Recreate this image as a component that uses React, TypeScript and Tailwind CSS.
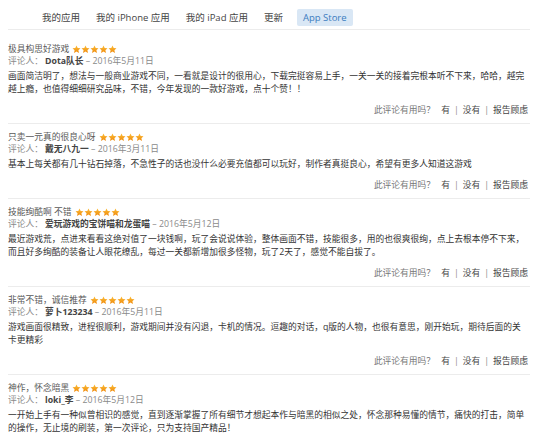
import React from 'react';

type Review = {
  title: string;
  name: string;
  date: string;
  lines: string[];
};

const reviews: Review[] = [
  {
    title: '极具构思好游戏',
    name: 'Dota队长',
    date: '2016年5月11日',
    lines: [
      '画面简洁明了，想法与一般商业游戏不同，一看就是设计的很用心，下载完挺容易上手，一关一关的接着完根本听不下来，哈哈，越完',
      '越上瘾，也值得细细研究品味，不错，今年发现的一款好游戏，点十个赞！！',
    ],
  },
  {
    title: '只卖一元真的很良心呀',
    name: '戴无八九一',
    date: '2016年3月11日',
    lines: ['基本上每关都有几十钻石掉落，不急性子的话也没什么必要充值都可以玩好，制作者真挺良心，希望有更多人知道这游戏'],
  },
  {
    title: '技能绚酷啊 不错',
    name: '爱玩游戏的宝饼喵和龙蛋喵',
    date: '2016年5月12日',
    lines: [
      '最近游戏荒，点进来看看这绝对值了一块钱啊，玩了会说说体验，整体画面不错，技能很多，用的也很爽很绚，点上去根本停不下来，',
      '而且好多绚酷的装备让人眼花缭乱，每过一关都新增加很多怪物，玩了2天了，感觉不能自拔了。',
    ],
  },
  {
    title: '非常不错，诚信推荐',
    name: '萝卜123234',
    date: '2016年5月11日',
    lines: [
      '游戏画面很精致，进程很顺利，游戏期间并没有闪退，卡机的情况。逗趣的对话，q版的人物，也很有意思，刚开始玩，期待后面的关',
      '卡更精彩',
    ],
  },
  {
    title: '神作，怀念暗黑',
    name: 'loki_李',
    date: '2016年5月12日',
    lines: [
      '一开始上手有一种似曾相识的感觉，直到逐渐掌握了所有细节才想起本作与暗黑的相似之处，怀念那种易懂的情节，痛快的打击，简单',
      '的操作，无止境的刷装，第一次评论，只为支持国产精品！',
    ],
  },
];

const Star = () => (
  <svg width="9" height="9" viewBox="0 0 24 24" className="shrink-0">
    <defs>
      <linearGradient id="starFill" x1="0" y1="0" x2="0" y2="1">
        <stop offset="0" stopColor="#fbbf3a" />
        <stop offset="1" stopColor="#f08a0c" />
      </linearGradient>
    </defs>
    <path
      d="M12 1l3.2 6.8 7.4.9-5.5 5.1 1.5 7.4L12 17.5l-6.6 3.7 1.5-7.4L1.4 8.7l7.4-.9z"
      fill="url(#starFill)"
    />
  </svg>
);

const Stars = () => (
  <span className="ml-[3px] inline-flex items-center">
    {[0, 1, 2, 3, 4].map((i) => (
      <Star key={i} />
    ))}
  </span>
);

const navItems = ['我的应用', '我的 iPhone 应用', '我的 iPad 应用', '更新'];

const ReviewBlock = ({ review, first, last }: { review: Review; first: boolean; last: boolean }) => (
  <div className={first ? 'pt-[13px] pb-[6px]' : 'border-t border-[#ececec] pt-[7px] pb-[6px]'}>
    <div className="flex items-center h-[12px] leading-[12px] text-[#5a5a5a]">
      <span>{review.title}</span>
      <Stars />
    </div>
    <div className="h-[12px] leading-[12px] whitespace-nowrap text-[#8a8a8a]">
      <span>评论人：</span>
      <span className="ml-[2px] font-bold text-[#444]">{review.name}</span>
      <span> – {review.date}</span>
    </div>
    <div className="mt-[3px] text-[#333]">
      {review.lines.map((line, i) => (
        <div key={i} className="h-[13px] leading-[13px] whitespace-nowrap">
          {line}
        </div>
      ))}
    </div>
    {!last && (
      <div className="mt-[8px] flex justify-end items-center h-[13px] leading-[13px] pr-[2px] whitespace-nowrap">
        <span className="text-[#777]">此评论有用吗？</span>
        <span className="ml-[6px] text-[#444]">有</span>
        <span className="px-[4px] text-[#888]">|</span>
        <span className="text-[#444]">没有</span>
        <span className="px-[4px] text-[#888]">|</span>
        <span className="text-[#444]">报告顾虑</span>
      </div>
    )}
  </div>
);

export default function App() {
  return (
    <div
      className="w-[539px] h-[443px] overflow-hidden bg-white text-[8.75px]"
      style={{ fontFamily: '"Open Sans", "Noto Sans CJK SC", sans-serif' }}
    >
      <div className="pl-[8px] pr-[9px]">
        <nav className="flex items-center gap-[4px] pl-[28px] pt-[9px] pb-[3px] border-b border-[#ececec] text-[9.5px]">
          {navItems.map((item) => (
            <span key={item} className="px-[6px] h-[17px] leading-[17px] text-[#444]">
              {item}
            </span>
          ))}
          <span className="ml-[4px] px-[6px] h-[17px] leading-[17px] rounded-[2px] bg-[#d9e7f5] text-[#3b7cc0]">
            App Store
          </span>
        </nav>
        {reviews.map((r, i) => (
          <ReviewBlock key={i} review={r} first={i === 0} last={i === reviews.length - 1} />
        ))}
      </div>
    </div>
  );
}
